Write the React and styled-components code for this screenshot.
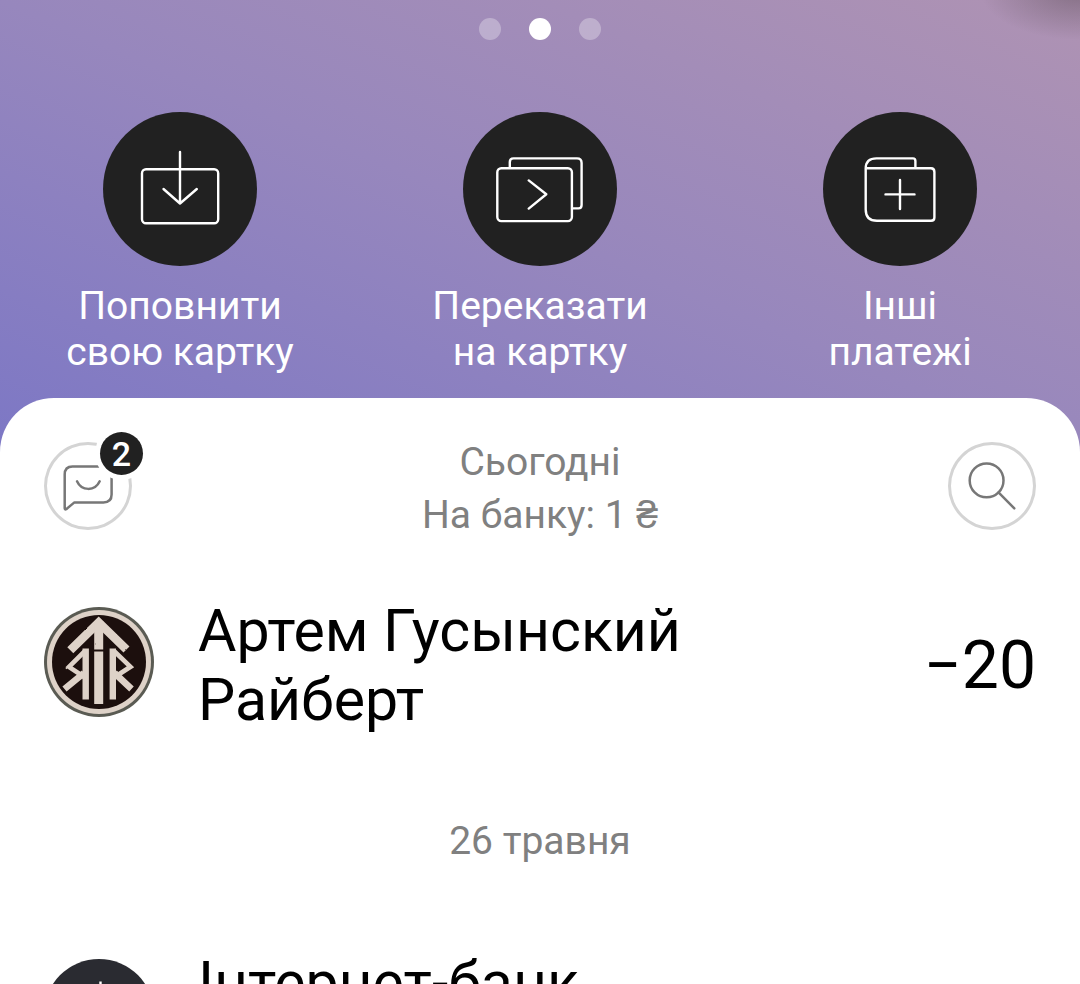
import React from 'react';
import styled, { createGlobalStyle } from 'styled-components';


const actions = [
    { id: 'topup', lines: ['Поповнити', 'свою картку'], icon: <TopUpIcon /> },
    { id: 'transfer', lines: ['Переказати', 'на картку'], icon: <TransferIcon /> },
    { id: 'other', lines: ['Інші', 'платежі'], icon: <OtherIcon /> },
];


const App = () => {
    return (
        <Page>
            <GlobalStyle />
            <Hero>
                <Dots>
                    <Dot type="button" aria-label="1" />
                    <Dot type="button" aria-label="2" $active />
                    <Dot type="button" aria-label="3" />
                </Dots>
                <Actions>
                    {actions.map(({ id, lines, icon }) => (
                        <ActionButton type="button" key={id}>
                            <ActionCircle>{icon}</ActionCircle>
                            <ActionLabel>{lines[0]}<br />{lines[1]}</ActionLabel>
                        </ActionButton>
                    ))}
                </Actions>
            </Hero>

            <Sheet>
                <SheetHeader>
                    <RoundButton type="button" aria-label="Чат">
                        <ChatIcon />
                        <Badge>2</Badge>
                    </RoundButton>
                    <Summary>
                        <p>Сьогодні</p>
                        <p>На банку: 1 ₴</p>
                    </Summary>
                    <RoundButton type="button" aria-label="Пошук">
                        <SearchIcon />
                    </RoundButton>
                </SheetHeader>

                <Transaction>
                    <Avatar><RuneLogo /></Avatar>
                    <Name>Артем Гусынский Райберт</Name>
                    <Amount>−20</Amount>
                </Transaction>

                <DateTitle>26 травня</DateTitle>

                <Transaction>
                    <Avatar><BankLogo /></Avatar>
                    <Name>Інтернет-банк</Name>
                </Transaction>
            </Sheet>
        </Page>
    )
};


function TopUpIcon() {
    return (
        <LineIcon viewBox="0 0 154 154">
            <rect x="39" y="57.3" width="76.2" height="54" rx="4" />
            <path d="M77 40V91.5M60.5 77L77 91.5L93.8 77" />
        </LineIcon>
    )
}

function TransferIcon() {
    return (
        <LineIcon viewBox="0 0 154 154">
            <rect x="34.3" y="56.3" width="74.6" height="52.8" rx="4" />
            <path d="M46.8 55.5V50Q46.8 46.4 50.5 46.4H114Q118.6 46.4 118.6 51V93Q118.6 96.4 115.5 96.4H110" />
            <path d="M65.7 68.4L83.3 82.3L65.7 96.6" />
        </LineIcon>
    )
}

function OtherIcon() {
    return (
        <LineIcon viewBox="0 0 154 154">
            <path d="M42.7 56.3H108Q111.4 56.3 111.4 60V105.5Q111.4 108.8 108 108.8H54Q42.7 108.8 42.7 97.5V56.5Q42.7 46.4 53.5 46.4H90Q92.4 46.4 92.4 49V56" />
            <path d="M62.5 82.4H91.5M77 68V97" />
        </LineIcon>
    )
}

function ChatIcon() {
    return (
        <RoundIcon viewBox="0 0 88 88">
            <path d="M28.5 24.4H60Q67.6 24.4 67.6 32V52.5Q67.6 60.4 59.5 60.4H30.4L22.2 67.2Q20.7 68 20.7 66V32.5Q20.7 24.4 28.5 24.4Z" />
            <path d="M33 39.3C37.5 49.3 51 49.5 55.7 39.3" />
        </RoundIcon>
    )
}

function SearchIcon() {
    return (
        <RoundIcon viewBox="0 0 88 88">
            <circle cx="38.6" cy="38.4" r="16.9" />
            <path d="M50.5 50.3L66.3 66.3" />
        </RoundIcon>
    )
}

function RuneLogo() {
    return (
        <svg viewBox="0 0 110 110">
            <filter id="rough" x="-10%" y="-10%" width="120%" height="120%" colorInterpolationFilters="sRGB">
                <feTurbulence type="fractalNoise" baseFrequency="0.2" numOctaves="1" seed="4" />
                <feDisplacementMap in="SourceGraphic" scale="2" xChannelSelector="R" yChannelSelector="G" />
            </filter>
            <circle cx="55" cy="55" r="55" fill="#5a5b53" />
            <circle cx="55" cy="55" r="52" fill="#ded2c8" />
            <circle cx="55" cy="55" r="47" fill="#1c0f0d" />
            <g filter="url(#rough)" fill="none" stroke="#ded2c8">
                <path d="M26.3 43.3L54.7 15.5L82.5 42.5" strokeWidth="8.6" />
                <path d="M54.7 14V42.6M54.7 44.4V97" strokeWidth="9" />
                <path d="M41.7 41.5V92.5M68.8 41.5V92.5" strokeWidth="6.4" />
                <path d="M41 44L25 59.8L41 70.5M70 44L86.5 59.8L70 70.5" strokeWidth="4.6" />
                <path d="M40 66L20.5 82M70.5 66L87.5 82" strokeWidth="6.6" />
            </g>
        </svg>
    )
}

function BankLogo() {
    return (
        <svg viewBox="0 0 110 110">
            <circle cx="55" cy="55" r="55" fill="#2a2b31" />
            <path d="M56.5 22.5V80" stroke="#fff" strokeWidth="2.4" />
        </svg>
    )
}


const GlobalStyle = createGlobalStyle`
    * {
        box-sizing: border-box;
    }
    body {
        margin: 0;
        font-family: Roboto, "Liberation Sans", sans-serif;
        background-color: #fff;
    }
    p, h2, h3 {
        margin: 0;
        font-weight: 400;
    }
    button {
        font-family: inherit;
        border: none;
        padding: 0;
        cursor: pointer;
    }
    svg {
        display: block;
        width: 100%;
        height: 100%;
    }
`;

const Page = styled.main`
    height: 100vh;
    overflow: hidden;
`;

const Hero = styled.section`
    padding: 18px 0 84px;
    background:
        radial-gradient(ellipse 100px 50px at 100% -10px, rgba(90, 75, 85, 0.5), transparent),
        linear-gradient(to top right, #7c77c5, #9787bd 50%, #af93b3);
`;

const Dots = styled.div`
    display: flex;
    justify-content: center;
    gap: 28px;
`;

const Dot = styled.button`
    width: 22px;
    height: 22px;
    border-radius: 50%;
    background-color: ${({ $active }) => ($active ? '#fff' : 'rgba(255, 255, 255, 0.3)')};
`;

const Actions = styled.div`
    display: grid;
    grid-template-columns: repeat(3, 1fr);
    margin-top: 72px;
`;

const ActionButton = styled.button`
    display: flex;
    flex-direction: column;
    align-items: center;
    gap: 17px;
    background: transparent;
    color: #fff;
`;

const ActionCircle = styled.span`
    width: 154px;
    height: 154px;
    border-radius: 50%;
    background-color: #212121;
`;

const ActionLabel = styled.span`
    font-size: 39px;
    line-height: 46px;
`;

const LineIcon = styled.svg`
    fill: none;
    stroke: #fff;
    stroke-width: 2.4;
    stroke-linecap: round;
    stroke-linejoin: round;
`;

const Sheet = styled.section`
    margin-top: -61px;
    padding: 38px 44px 44px;
    border-radius: 54px 54px 0 0;
    background-color: #fff;
`;

const SheetHeader = styled.header`
    display: flex;
    justify-content: space-between;
    align-items: flex-start;
    margin-bottom: 54px;
`;

const Summary = styled.div`
    color: #808080;
    font-size: 39px;
    line-height: 53px;
    text-align: center;
`;

const RoundButton = styled.button`
    position: relative;
    width: 88px;
    height: 88px;
    margin-top: 6px;
    border-radius: 50%;
    background-color: #fff;
    box-shadow: inset 0 0 0 3px #d4d4d4;
`;

const RoundIcon = styled.svg`
    fill: none;
    stroke: #777;
    stroke-width: 2.5;
    stroke-linecap: round;
    stroke-linejoin: round;
`;

const Badge = styled.span`
    position: absolute;
    top: -10px;
    right: -11px;
    width: 43px;
    height: 43px;
    border-radius: 50%;
    background-color: #212121;
    box-shadow: 0 0 0 5px #fff;
    color: #fff;
    font-size: 34px;
    font-weight: 500;
    line-height: 44px;
    text-align: center;
`;

const Transaction = styled.article`
    display: flex;
    align-items: flex-start;
    color: #000;
`;

const Avatar = styled.div`
    flex: none;
    width: 110px;
    height: 110px;
    margin: 11px 44px 0 0;
`;

const Name = styled.h3`
    flex: 1;
    font-size: 59px;
    line-height: 69px;
`;

const Amount = styled.p`
    align-self: center;
    margin-left: 44px;
    font-size: 66px;
    line-height: 77px;
`;

const DateTitle = styled.h2`
    margin: 84px 0;
    color: #808080;
    font-size: 39px;
    line-height: 46px;
    text-align: center;
`;


export default App;
